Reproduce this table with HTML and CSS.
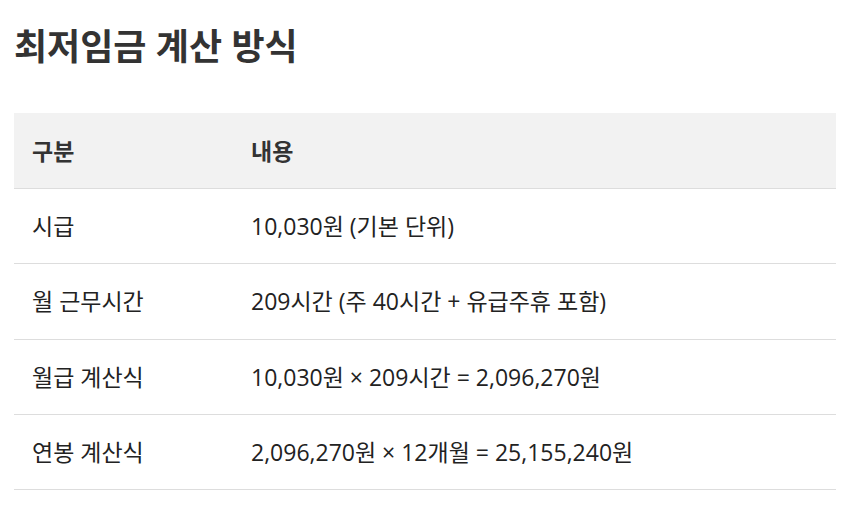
FILE: index.html
```html
<!DOCTYPE html>
<html lang="ko">
<head>
<meta charset="utf-8">
<title>최저임금 계산 방식</title>
<link rel="stylesheet" href="styles.css">
</head>
<body>
<main class="page">
  <h1 class="title">최저임금 계산 방식</h1>
  <table class="wage-table">
    <thead>
      <tr><th class="col-label">구분</th><th>내용</th></tr>
    </thead>
    <tbody>
      <tr><td>시급</td><td>10,030원 (기본 단위)</td></tr>
      <tr><td>월 근무시간</td><td>209시간 (주 40시간 + 유급주휴 포함)</td></tr>
      <tr><td>월급 계산식</td><td>10,030원 × 209시간 = 2,096,270원</td></tr>
      <tr><td>연봉 계산식</td><td>2,096,270원 × 12개월 = 25,155,240원</td></tr>
    </tbody>
  </table>
</main>
</body>
</html>
```

FILE: styles.css
```css
html, body {
  margin: 0;
  padding: 0;
  background: #ffffff;
}
body {
  font-family: "Open Sans", "Noto Sans CJK KR", sans-serif;
  color: #222222;
}
.page {
  padding: 0 15px 0 14px;
}
.title {
  margin: 0 0 22px 0;
  padding-top: 20px;
  font-size: 36px;
  line-height: 54px;
  font-weight: 700;
  color: #333333;
  height: 91px;
  box-sizing: border-box;
}
.wage-table {
  width: 100%;
  border-collapse: collapse;
  font-size: 23px;
}
.wage-table th,
.wage-table td {
  text-align: left;
  padding: 21px 18px 21px;
  line-height: 32.2px;
  border-bottom: 1px solid #dddddd;
}
.wage-table th {
  background: #f2f2f2;
  font-weight: 700;
  color: #333333;
  padding-top: 22px;
}
.wage-table .col-label {
  width: 183px;
}
```
